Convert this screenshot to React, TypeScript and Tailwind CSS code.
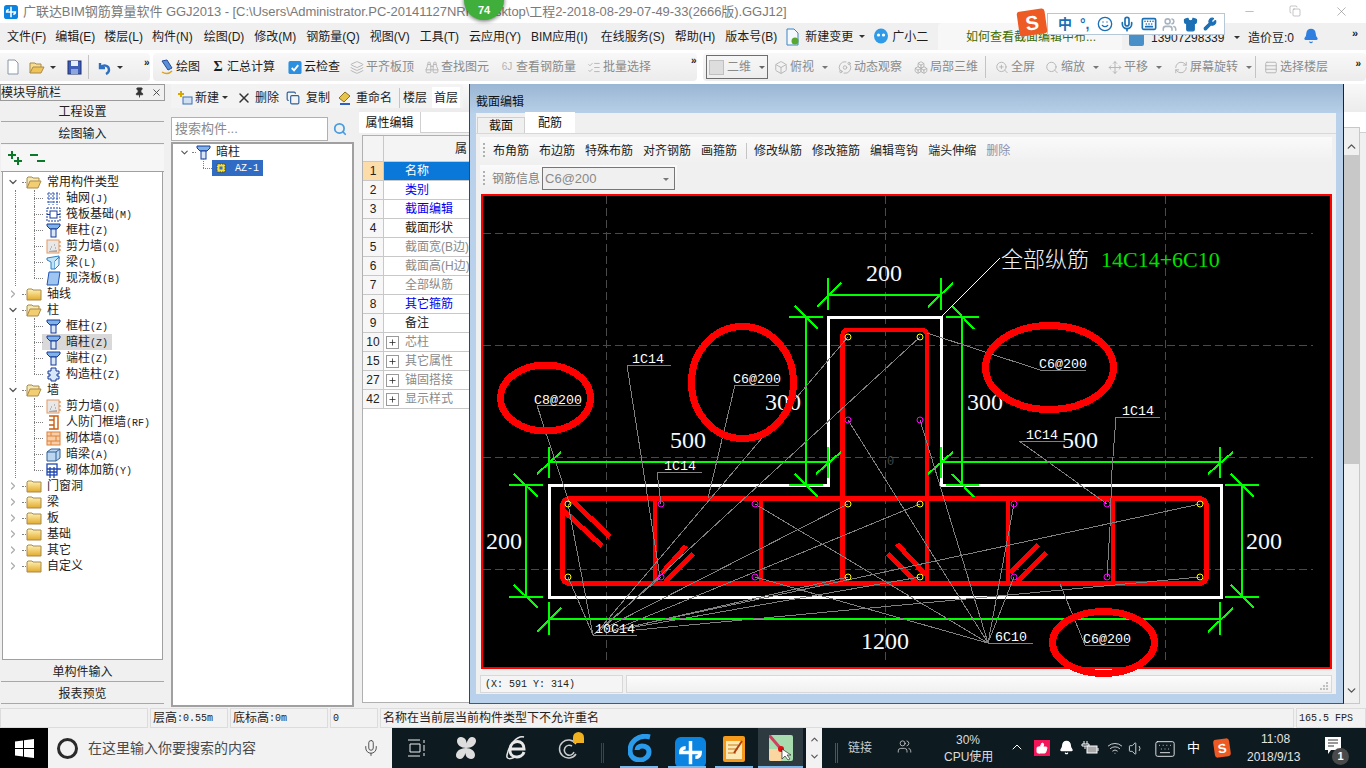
import React from "react";
import {
  Binoculars,
  Box,
  ChevronDown,
  ChevronRight,
  ChevronUp,
  Copy,
  Layers,
  ListChecks,
  Mic,
  Move,
  Orbit,
  RefreshCw,
  Rows3,
  Search,
  Shirt,
  Smile,
  Wrench,
  X,
  ZoomIn,
  Boxes,
  Bell,
  Wifi,
  Volume1,
  Keyboard,
  Users,
  ThumbsUp,
  Minus,
  Plus,
  Pin,
} from "lucide-react";

const mono = "font-['Liberation_Mono','Noto_Sans_CJK_SC',monospace]";

/* ---------- small drawn icons ---------- */
const Col = () => (
  <svg width="15" height="15" viewBox="0 0 15 15" className="shrink-0">
    <path d="M1 1h13v2l-3 3H4L1 3z" fill="#7fb2e5" stroke="#17389c" />
    <rect x="5" y="6" width="5" height="8" fill="#d7e7f8" stroke="#17389c" />
  </svg>
);
const AxisGrid = () => (
  <svg width="15" height="15" viewBox="0 0 15 15" className="shrink-0" stroke="#2a55b5" fill="none">
    <path d="M3 1v13M7 1v13M11 1v13M1 3h13M1 7h13M1 11h13" strokeDasharray="2 1" />
  </svg>
);
const Raft = () => (
  <svg width="15" height="15" viewBox="0 0 15 15" className="shrink-0" fill="none" stroke="#17389c">
    <rect x="1" y="1" width="13" height="13" strokeDasharray="2 1" />
    <rect x="4" y="4" width="7" height="7" />
    <path d="M1 7.500h3M11 7.500h3" />
  </svg>
);
const Shear = () => (
  <svg width="15" height="15" viewBox="0 0 15 15" className="shrink-0">
    <rect x="1" y="1" width="12" height="13" fill="#e8e8e8" stroke="#e49a62" />
    <path d="M3 12l8-1v2H3z" fill="#aaa" />
    <path d="M5 8h1M8 6h1M4 10h1M9 9h1" stroke="#888" />
    <path d="M13 3h2M13 7h2M13 11h2" stroke="#e07020" />
  </svg>
);
const BeamI = () => (
  <svg width="15" height="15" viewBox="0 0 15 15" className="shrink-0">
    <path d="M1 3l12-2v3L9 6v8H5V7L1 5z" fill="#bfe3f6" stroke="#2f7fc0" />
    <path d="M9 6l4-4v8l-4 4" fill="#e3f2fb" stroke="#2f7fc0" />
  </svg>
);
const Slab = () => (
  <svg width="15" height="15" viewBox="0 0 15 15" className="shrink-0">
    <path d="M3 1h11l-2 13H1z" fill="#9fc6f0" stroke="#1f54b5" />
  </svg>
);
const Struct = () => (
  <svg width="15" height="15" viewBox="0 0 15 15" className="shrink-0">
    <path d="M5 1h5v3h3v3h-2v2h2v3h-3v2H5v-2H2V9h2V7H2V4h3z" fill="#d7e7f8" stroke="#17389c" />
  </svg>
);
const DoorI = () => (
  <svg width="15" height="15" viewBox="0 0 15 15" className="shrink-0" fill="none" stroke="#c85c10" strokeWidth="1.4">
    <path d="M3 1h9v13H3M8 1v13M3 5h5M3 10h5" />
  </svg>
);
const Brick = () => (
  <svg width="15" height="15" viewBox="0 0 15 15" className="shrink-0">
    <rect x="1" y="1" width="13" height="13" fill="#f6cfa8" stroke="#e0803a" />
    <path d="M1 5h13M1 10h13M5 1v4M10 5v5M5 10v4" stroke="#e0803a" />
  </svg>
);
const DarkBeam = () => (
  <svg width="15" height="15" viewBox="0 0 15 15" className="shrink-0">
    <path d="M1 5l4-3h9v9l-4 3H1z" fill="#bcd6f0" stroke="#2f5f99" />
    <path d="M1 5h9v9M10 5l4-3" fill="none" stroke="#2f5f99" />
  </svg>
);
const RebarI = () => (
  <svg width="15" height="15" viewBox="0 0 15 15" className="shrink-0" fill="none" stroke="#1f48b0" strokeWidth="1.3">
    <rect x="1" y="1" width="10" height="11" />
    <path d="M4 4v11M8 4v11M1 6h14M1 9h10" />
  </svg>
);
const FolderC = () => (
  <svg width="16" height="14" viewBox="0 0 16 14" className="shrink-0">
    <defs>
      <linearGradient id="fc" x1="0" y1="0" x2="0" y2="1">
        <stop offset="0" stopColor="#fff3b8" />
        <stop offset="1" stopColor="#e3a92c" />
      </linearGradient>
    </defs>
    <path d="M1 3l1-1h4l1 1h8v10H1z" fill="url(#fc)" stroke="#a98a4a" />
  </svg>
);
const FolderO = () => (
  <svg width="16" height="14" viewBox="0 0 16 14" className="shrink-0">
    <path d="M1 13V3l1-1h4l1 1h6v3" fill="#f7e7b0" stroke="#a98a4a" />
    <path d="M1 13l3-7h11l-3 7z" fill="#f3cd72" stroke="#a98a4a" />
  </svg>
);
const Gear = () => (
  <svg width="12" height="12" viewBox="0 0 12 12" className="shrink-0">
    <rect x="2" y="2" width="8" height="8" fill="#f4e13c" stroke="#5a4a00" strokeDasharray="1.500 1" />
    <rect x="4.500" y="4.500" width="3" height="3" fill="#3a6fc9" />
  </svg>
);
const AppLogo = ({ size }: { size: number }) => (
  <svg width={size} height={size} viewBox="0 0 16 16" className="shrink-0">
    <rect width="16" height="16" rx="3" fill="#0a84e0" />
    <path d="M8 2v12M8 8H3c0-2 1-2.500 2.500-2.500M8 8h5c0 2-1 2.500-2.500 2.500" fill="none" stroke="#fff" strokeWidth="1.800" />
  </svg>
);

/* ---------- top bars ---------- */
const MENU = ["文件(F)", "编辑(E)", "楼层(L)", "构件(N)", "绘图(D)", "修改(M)", "钢筋量(Q)", "视图(V)", "工具(T)", "云应用(Y)", "BIM应用(I)", "在线服务(S)", "帮助(H)", "版本号(B)"];

const Caret = ({ className = "" }: { className?: string }) => (
  <span className={`inline-block w-0 h-0 border-x-[3px] border-x-transparent border-t-[3px] border-t-[#333] shrink-0 ${className}`} />
);

const Tool = ({ icon, text, off, ml, caret }: { icon: React.ReactNode; text: string; off?: boolean; ml: string; caret?: boolean }) => (
  <span className={`flex items-center gap-[2px] ${ml} ${off ? "text-[#8a8a8a]" : "text-[#1c1c1c]"}`}>
    <span className="w-[14px] h-[16px] flex items-center justify-center shrink-0">{icon}</span>
    <span className="whitespace-nowrap">{text}</span>
    {caret && <Caret className="ml-[6px] border-t-[#777]" />}
  </span>
);

const gray = { size: 15, color: "#b4b4b4", strokeWidth: 1.6 };

function TitleBar() {
  return (
    <div className="h-[23px] flex items-center bg-white text-[13px] text-[#7a7a7a] relative shrink-0">
      <span className="ml-[4px]"><AppLogo size={14} /></span>
      <span className="ml-[5px] whitespace-nowrap leading-none tracking-[-0.06px]">
        广联达BIM钢筋算量软件 GGJ2013 - [C:\Users\Administrator.PC-20141127NRH\Desktop\工程2-2018-08-29-07-49-33(2666版).GGJ12]
      </span>
      <Minus className="absolute left-[1243px] top-[5px]" size={13} color="#888" strokeWidth={1} />
      <Copy className="absolute left-[1289px] top-[5px]" size={12} color="#888" strokeWidth={1} />
      <X className="absolute left-[1334px] top-[4px]" size={15} color="#888" strokeWidth={1} />
    </div>
  );
}

function MenuBar() {
  return (
    <div className="h-[27px] flex items-center bg-[#f0f0f0] pl-[7px] text-[#1c1c1c] shrink-0 relative">
      <div className="flex items-center gap-[10px]">
        {MENU.map((m, i) => (
          <span key={m} className={`whitespace-nowrap ${i === 11 ? "ml-[3px]" : ""} ${i > 0 && i < 4 ? "-ml-[1px]" : ""} ${i === 4 ? "ml-[1px]" : ""}`}>{m}</span>
        ))}
      </div>
      <svg width="15" height="18" viewBox="0 0 15 18" className="ml-[8px] shrink-0">
        <path d="M2 1h7l4 4v12H2z" fill="#f4f9ff" stroke="#3d85c6" />
        <circle cx="10" cy="13" r="3.500" fill="#58a830" />
      </svg>
      <span className="ml-[5px] whitespace-nowrap">新建变更</span>
      <Caret className="ml-[6px]" />
      <svg width="16" height="17" viewBox="0 0 16 17" className="ml-[8px] shrink-0">
        <ellipse cx="8" cy="8" rx="7" ry="7.500" fill="#2f9be8" />
        <circle cx="5.500" cy="7" r="1.600" fill="#fff" />
        <circle cx="10.500" cy="7" r="1.600" fill="#fff" />
      </svg>
      <span className="ml-[3px] whitespace-nowrap">广小二</span>
      <span className="absolute left-[938px] top-0 h-[27px] w-[184px] bg-[#f7f7f7] rounded-t-[4px] flex items-center pl-[28px] text-[#3f6b00] whitespace-nowrap">
        如何查看截面编辑中布...
      </span>
      <span className="absolute left-[1129px] top-[8px] w-[15px] h-[15px] rounded-[2px] bg-[#4a90c8]" />
      <span className="absolute left-[1151px] top-[6px] whitespace-nowrap">13907298339</span>
      <Caret className="absolute left-[1234px] top-[13px]" />
      <span className="absolute left-[1248px] top-[6px] whitespace-nowrap">造价豆:0</span>
      <Bell className="absolute left-[1303px] top-[5px]" size={16} color="#2f7fe0" fill="#2f7fe0" />
      <span className="absolute left-[1352px] top-[2px] text-[11px] font-bold">»</span>
    </div>
  );
}

function ToolBar() {
  return (
    <div className="h-[28px] mt-[3px] mb-[3px] flex items-center text-[#1c1c1c] shrink-0 relative">
      <div className="h-full w-[150px] bg-gradient-to-b from-[#f8f8f8] to-[#ececec] rounded-r-[4px] flex items-center pl-[6px] relative">
        <svg width="14" height="16" viewBox="0 0 14 16"><path d="M2 1h7l3 3v11H2z" fill="#fff" stroke="#8a96a8" /></svg>
        <svg width="16" height="15" viewBox="0 0 16 15" className="ml-[9px]"><path d="M1 13V3h5l1 1h5v3" fill="#f7dd8f" stroke="#a98a4a" /><path d="M1 13l3-6h11l-3 6z" fill="#efc35a" stroke="#a98a4a" /></svg>
        <Caret className="ml-[5px]" />
        <svg width="15" height="15" viewBox="0 0 15 15" className="ml-[11px]"><rect x="1" y="1" width="13" height="13" fill="#3f5fb5" stroke="#1f2f70" /><rect x="4" y="1" width="7" height="5" fill="#e8eefc" /><rect x="4" y="9" width="7" height="5" fill="#8ea6de" /></svg>
        <span className="ml-[6px] w-px h-[24px] bg-[#c4c4c4]" />
        <svg width="14" height="15" viewBox="0 0 14 15" className="ml-[8px]" fill="none" stroke="#2f6fc0" strokeWidth="2.400"><path d="M3 3v5h5" /><path d="M3 8c3-4 9-3 9 2 0 2-1 3-3 4" /></svg>
        <Caret className="ml-[6px]" />
        <span className="ml-[21px] text-[10px] font-bold leading-none -mt-[8px]">»</span>
      </div>
      <div className="h-full w-[544px] ml-[3px] bg-gradient-to-b from-[#f8f8f8] to-[#ececec] rounded-[4px] flex items-center pl-[7px]">
        <Tool ml="" text="绘图" icon={<svg width="14" height="16" viewBox="0 0 14 16"><path d="M2 2l6 9 4-2-5-8z" fill="#5a8fd8" stroke="#234a9a" /><path d="M2 13c3 2 7 2 10-1" stroke="#e0a020" strokeWidth="1.500" fill="none" /></svg>} />
        <Tool ml="ml-[11px]" text="汇总计算" icon={<span className="font-['Liberation_Serif'] font-bold text-[14px] leading-none">Σ</span>} />
        <Tool ml="ml-[13px]" text="云检查" icon={<svg width="15" height="15" viewBox="0 0 15 15"><rect x="0.500" y="0.500" width="14" height="14" rx="2" fill="#2c8fe0" /><path d="M4 8l2.500 2.500L11 5" stroke="#fff" strokeWidth="2" fill="none" /></svg>} />
        <Tool ml="ml-[10px]" off text="平齐板顶" icon={<Layers {...gray} />} />
        <Tool ml="ml-[11px]" off text="查找图元" icon={<Binoculars {...gray} />} />
        <Tool ml="ml-[11px]" off text="查看钢筋量" icon={<span className="text-[#b4b4b4] text-[10px] leading-none whitespace-nowrap">6J</span>} />
        <Tool ml="ml-[11px]" off text="批量选择" icon={<ListChecks {...gray} />} />
      </div>
      <span className="absolute left-[691px] top-[0px] text-[10px] font-bold">»</span>
      <div className="h-full flex-1 ml-[6px] bg-gradient-to-b from-[#f8f8f8] to-[#ececec] rounded-[4px] flex items-center pl-[3px] text-[#8a8a8a]">
        <span className="w-[62px] h-[24px] border border-[#6e6e6e] flex items-center pl-[2px] gap-[3px] shrink-0 whitespace-nowrap">
          <span className="w-[15px] h-[15px] bg-[#ddd] border border-[#c0c0c0] shrink-0" />
          <span>二维</span>
          <Caret className="ml-[5px] border-t-[#666]" />
        </span>
        <Tool ml="ml-[6px]" off caret text="俯视" icon={<Box {...gray} />} />
        <Tool ml="ml-[10px]" off text="动态观察" icon={<Orbit {...gray} />} />
        <Tool ml="ml-[12px]" off text="局部三维" icon={<Boxes {...gray} />} />
        <span className="ml-[7px] w-px h-[22px] bg-[#c4c4c4]" />
        <Tool ml="ml-[9px]" off text="全屏" icon={<ZoomIn {...gray} />} />
        <Tool ml="ml-[10px]" off caret text="缩放" icon={<Search {...gray} />} />
        <Tool ml="ml-[9px]" off caret text="平移" icon={<Move {...gray} />} />
        <Tool ml="ml-[12px]" off caret text="屏幕旋转" icon={<RefreshCw {...gray} />} />
        <span className="ml-[3px] w-px h-[22px] bg-[#c4c4c4]" />
        <Tool ml="ml-[8px]" off text="选择楼层" icon={<Rows3 {...gray} />} />
        <span className="ml-auto mr-[5px] text-[10px] font-bold text-[#1c1c1c] -mt-[8px]">»</span>
      </div>
    </div>
  );
}

/* ---------- left navigation ---------- */
const NavButton = ({ text }: { text: string }) => (
  <div className="h-[21px] mb-[1px] mx-[1px] pt-[1px] bg-[#f0f0f0] border-b border-[#a8a8a8] flex items-center justify-center text-[#222] text-[12px]">{text}</div>
);

const Group = ({ name, open }: { name: string; open?: boolean }) => (
  <div className="relative h-[16px] flex items-center pl-[4px]">
    {open ? <ChevronDown size={12} color="#555" strokeWidth={2.4} /> : <ChevronRight size={12} color="#aaa" strokeWidth={2.4} />}
    <span className="w-[4px] ml-[3px] border-t border-dotted border-[#808080]" />
    {open ? <FolderO /> : <FolderC />}
    <span className="ml-[5px] text-[#222]">{name}</span>
  </div>
);

const Leaf = ({ icon, name, code, last, active }: { icon: React.ReactNode; name: string; code: string; last?: boolean; active?: boolean }) => (
  <div className="relative h-[16px] flex items-center pl-[39px]">
    <span className="absolute left-[12px] top-0 h-full border-l border-dotted border-[#808080]" />
    <span className={`absolute left-[31px] top-0 border-l border-dotted border-[#808080] ${last ? "h-[8px]" : "h-full"}`} />
    <span className="absolute left-[31px] top-[8px] w-[9px] border-t border-dotted border-[#808080]" />
    <span className={`flex items-center h-[16px] pr-[4px] ${active ? "bg-[#d9d9d9]" : ""}`}>
      <span className="ml-[4px]">{icon}</span>
      <span className="ml-[5px] text-[#222] whitespace-nowrap">
        {name}
        <span className={`${mono} text-[10px]`}>{code}</span>
      </span>
    </span>
  </div>
);

function LeftPanel() {
  return (
    <div className="w-[165px] shrink-0 flex flex-col h-full">
      <div className="h-[17px] bg-[#f0f0f0] border border-[#9a9a9a] flex items-center text-[#222] relative leading-none">
        <span>模块导航栏</span>
        <Pin className="absolute left-[133px] top-[2px]" size={11} color="#333" fill="#333" />
        <X className="absolute left-[150px] top-[2px]" size={11} color="#444" />
      </div>
      <NavButton text="工程设置" />
      <NavButton text="绘图输入" />
      <div className="h-[27px] mx-[1px] flex items-center pl-[6px] bg-[#f6f6f6] border-b border-[#a0a0a0]">
        <svg width="16" height="16" viewBox="0 0 16 16" stroke="#0a7a2a" strokeWidth="2"><path d="M5 1v8M1 5h8M11 7v8M7 11h8" /></svg>
        <svg width="16" height="16" viewBox="0 0 16 16" stroke="#0a7a2a" strokeWidth="2" className="ml-[7px]"><path d="M0 5h8M7 11h8" /></svg>
      </div>
      <div className="h-[488px] mx-[2px] bg-white border-x border-b border-[#a0a0a0] text-[12px] pt-[2px] overflow-hidden">
        <Group name="常用构件类型" open />
        <Leaf icon={<AxisGrid />} name="轴网" code="(J)" />
        <Leaf icon={<Raft />} name="筏板基础" code="(M)" />
        <Leaf icon={<Col />} name="框柱" code="(Z)" />
        <Leaf icon={<Shear />} name="剪力墙" code="(Q)" />
        <Leaf icon={<BeamI />} name="梁" code="(L)" />
        <Leaf icon={<Slab />} name="现浇板" code="(B)" last />
        <Group name="轴线" />
        <Group name="柱" open />
        <Leaf icon={<Col />} name="框柱" code="(Z)" />
        <Leaf icon={<Col />} name="暗柱" code="(Z)" active />
        <Leaf icon={<Col />} name="端柱" code="(Z)" />
        <Leaf icon={<Struct />} name="构造柱" code="(Z)" last />
        <Group name="墙" open />
        <Leaf icon={<Shear />} name="剪力墙" code="(Q)" />
        <Leaf icon={<DoorI />} name="人防门框墙" code="(RF)" />
        <Leaf icon={<Brick />} name="砌体墙" code="(Q)" />
        <Leaf icon={<DarkBeam />} name="暗梁" code="(A)" />
        <Leaf icon={<RebarI />} name="砌体加筋" code="(Y)" last />
        {["门窗洞", "梁", "板", "基础", "其它", "自定义"].map((g) => (
          <Group key={g} name={g} />
        ))}
      </div>
      <div className="h-[1px]" />
      <NavButton text="单构件输入" />
      <NavButton text="报表预览" />
    </div>
  );
}

/* ---------- component list ---------- */
function MiddlePanel() {
  return (
    <div className="w-[183px] ml-[6px] shrink-0 flex flex-col h-full">
      <div className="h-[24px] pt-[3px] flex items-center text-[#1c1c1c] whitespace-nowrap bg-[#f3f3f3] w-[292px] relative z-0">
        <svg width="15" height="15" viewBox="0 0 15 15" className="ml-[7px]"><path d="M3 1v6M0 4h6" stroke="#d8a800" strokeWidth="2" /><rect x="5" y="7" width="9" height="7" fill="#cfe0f5" stroke="#3f6fb0" /></svg>
        <span className="ml-[2px]">新建</span>
        <Caret className="ml-[3px]" />
        <X className="ml-[8px]" size={16} color="#333" strokeWidth={2.2} />
        <span className="ml-[3px]">删除</span>
        <Copy className="ml-[7px]" size={14} color="#2f5f99" />
        <span className="ml-[6px]">复制</span>
        <svg width="15" height="15" viewBox="0 0 15 15" className="ml-[7px]"><path d="M2 8l6-6 5 4-6 6z" fill="#e6c54a" stroke="#8a7020" /><path d="M3 14h10" stroke="#2f5fc0" strokeWidth="2" /></svg>
        <span className="ml-[4px]">重命名</span>
        <span className="ml-[7px] w-px h-[20px] bg-[#c4c4c4]" />
        <span className="ml-[3px]">楼层</span>
        <span className="ml-[5px] px-[2px] h-[21px] bg-white flex items-center">首层</span>
      </div>
      <div className="flex items-center mt-[9px] h-[24px] shrink-0">
        <div className="w-[157px] h-[24px] bg-white border border-[#b0b0b0] flex items-center pl-[3px] text-[#8a8a8a] text-[13px]">搜索构件...</div>
        <Search className="ml-[5px]" size={14} color="#4a9be0" strokeWidth={3} />
      </div>
      <div className="mt-[1px] flex-1 bg-white border-2 border-[#a0a0a0] relative text-[12px]">
        <div className="h-[16px] flex items-center pl-[6px]">
          <ChevronDown size={11} color="#555" strokeWidth={2.4} />
          <span className="w-[4px] ml-[2px] border-t border-dotted border-[#808080]" />
          <Col />
          <span className="ml-[5px] text-[#222]">暗柱</span>
        </div>
        <div className="relative h-[16px] ml-[39px] w-[51px] bg-[#316cc4] flex items-center pl-[3px] text-white">
          <span className="absolute -left-[9px] -top-[2px] h-[10px] border-l border-dotted border-[#808080]" />
          <span className="absolute -left-[9px] top-[8px] w-[9px] border-t border-dotted border-[#808080]" />
          <Gear />
          <span className={`ml-[8px] ${mono} text-[10px]`}>AZ-1</span>
        </div>
      </div>
    </div>
  );
}

/* ---------- property table (mostly behind the dialog) ---------- */
const PROPS: { n: string; t: string; c: string; plus?: boolean; sel?: boolean }[] = [
  { n: "1", t: "名称", c: "text-white", sel: true },
  { n: "2", t: "类别", c: "text-[#0000f0]" },
  { n: "3", t: "截面编辑", c: "text-[#0000f0]" },
  { n: "4", t: "截面形状", c: "text-[#222]" },
  { n: "5", t: "截面宽(B边)", c: "text-[#8a8a8a]" },
  { n: "6", t: "截面高(H边)", c: "text-[#8a8a8a]" },
  { n: "7", t: "全部纵筋", c: "text-[#8a8a8a]" },
  { n: "8", t: "其它箍筋", c: "text-[#0000f0]" },
  { n: "9", t: "备注", c: "text-[#222]" },
  { n: "10", t: "芯柱", c: "text-[#8a8a8a]", plus: true },
  { n: "15", t: "其它属性", c: "text-[#8a8a8a]", plus: true },
  { n: "27", t: "锚固搭接", c: "text-[#8a8a8a]", plus: true },
  { n: "42", t: "显示样式", c: "text-[#8a8a8a]", plus: true },
];

function RightPanel() {
  return (
    <div className="flex-1 ml-[5px] h-full flex flex-col bg-[#f0f0f0]">
      <div className="h-[28px] bg-gradient-to-b from-[#f8f8f8] to-[#ececec] shrink-0" />
      <div className="h-[21px] bg-white border-b border-[#d0d0d0] shrink-0 flex">
        <span className="w-[62px] h-[21px] bg-white border-r border-[#d0d0d0] flex items-center justify-center text-[#111]">属性编辑</span>
      </div>
      <div className="flex-1 flex">
        <div className="ml-[3px] mt-[2px] mb-[4px] w-[110px] overflow-hidden bg-white border border-[#b0b0b0] text-[12px]">
          <div className="h-[26px] flex border-b border-[#c8c8c8] bg-[#f4f4f4]">
            <span className="w-[21px] border-r border-[#c8c8c8]" />
            <span className="pl-[71px] flex items-center text-[#222]">属</span>
          </div>
          {PROPS.map((p) => (
            <div key={p.n} className="h-[19px] flex border-b border-[#c8c8c8] whitespace-nowrap">
              <span className={`w-[21px] shrink-0 border-r border-[#c8c8c8] flex items-center justify-center text-[#222] text-[12px] ${p.sel ? "bg-[#fcdca8]" : "bg-[#f7f7f7]"}`}>{p.n}</span>
              <span className={`flex-1 flex items-center pl-[21px] ${p.sel ? "bg-[#0a78d8]" : ""} ${p.c}`}>
                {p.plus && (
                  <span className="-ml-[19px] mr-[6px] w-[13px] h-[13px] border border-[#9a9a9a] flex items-center justify-center shrink-0">
                    <Plus size={9} color="#222" />
                  </span>
                )}
                {p.t}
              </span>
            </div>
          ))}
        </div>
      </div>
    </div>
  );
}

/* ---------- the section drawing ---------- */
const YELLOW = [[568, 504], [568, 577], [848, 504], [848, 577], [920, 504], [920, 577], [1200, 504], [1200, 577], [848, 337], [920, 337]];
const MAGENTA = [[661, 504], [661, 577], [755, 504], [755, 577], [1014, 504], [1014, 577], [1107, 504], [1107, 577], [848, 420], [920, 420]];

// dimension lines: [x1, y1, x2, y2]
const GREEN = [
  // top 200
  [828, 295, 941, 295], [828, 278, 828, 310], [817, 307, 841, 283], [941, 278, 941, 310], [928, 307, 953, 283],
  // left 300
  [806, 317, 806, 485], [789, 317, 823, 317], [795, 306, 818, 329], [789, 485, 823, 485], [795, 474, 818, 497],
  // right 300
  [962, 317, 962, 485], [946, 317, 979, 317], [952, 306, 974, 329], [946, 485, 979, 485], [952, 474, 974, 497],
  // 500 left and right
  [549, 462, 828, 462], [549, 447, 549, 478], [537, 474, 561, 452], [828, 447, 828, 478], [816, 474, 841, 452],
  [941, 462, 1220, 462], [941, 447, 941, 478], [928, 474, 953, 452], [1220, 447, 1220, 478], [1208, 474, 1233, 452],
  // left 200
  [526, 485, 526, 597], [509, 485, 543, 485], [514, 474, 538, 497], [509, 597, 543, 597], [514, 585, 538, 608],
  // right 200
  [1242, 485, 1242, 597], [1225, 485, 1259, 485], [1231, 474, 1254, 497], [1225, 597, 1259, 597], [1231, 585, 1254, 608],
  // 1200
  [549, 619, 1220, 619], [549, 602, 549, 635], [537, 632, 561, 608], [1220, 602, 1220, 635], [1208, 632, 1233, 608],
];

const HOOKS = [
  [572, 500, 610, 537], [563, 510, 602, 546],
  [662, 573, 686, 546], [665, 582, 693, 554],
  [897, 544, 926, 575], [888, 554, 917, 583],
  [1010, 573, 1038, 545], [1017, 582, 1046, 553],
];

const LEADERS = [
  "M537 405.500H581M537 405.500L570 505",
  "M627 365.500H671M627 365.500L660 577",
  "M657 472H702M657 472L661 504",
  "M735 385H779M735 385L708 498",
  "M1040 370H1086M1040 370L927 333",
  "M1116 417H1160M1116 417L1112 470L1110 527L1107 577",
  "M1019 441H1065M1019 441L1107 504",
  "M1085 645H1129M1085 645L1060 584",
  "M593 635H637",
  "M593 635L568 504M593 635L568 577M593 635L661 577M597 632L848 337M601 630L920 337",
  "M605 628L848 504M608 632L848 577M612 631L920 577M614 630L920 504M620 629L1200 504M636 630L1200 577",
  "M988 643H1033",
  "M988 643L755 504M988 643L755 577M988 643L1014 504M988 643L1014 577M988 643L848 420M988 643L920 420",
];

const LABELS: [string, number, number][] = [
  ["C8@200", 534, 404], ["1C14", 632, 363], ["1C14", 664, 470], ["C6@200", 733, 383],
  ["C6@200", 1039, 368], ["1C14", 1122, 415], ["1C14", 1026, 439], ["10C14", 595, 633],
  ["6C10", 995, 641], ["C6@200", 1083, 643],
];

const DIMS: [string, number, number][] = [
  ["200", 866, 281], ["300", 765, 410], ["300", 967, 410], ["500", 670, 448], ["500", 1062, 448],
  ["200", 486, 549], ["200", 1246, 549], ["1200", 861, 649],
];

function Drawing() {
  return (
    <svg width="851" height="475" viewBox="481 194 851 475" className="block overflow-visible ml-[5px] mt-[3px] relative z-10 shrink-0" shapeRendering="crispEdges">
      <rect x="482" y="195" width="849" height="473" fill="#000" stroke="#f00" strokeWidth="2" />
      <g stroke="#4a4a4a" strokeDasharray="8 4" fill="none">
        <path d="M483 233H1313M483 345H1313M483 457H1313M483 569H1313" />
        <path d="M606 196V663M885 196V663M1165 196V663" />
      </g>
      <path d="M828 485V317H941V485H1221V597H549V485Z" fill="none" stroke="#fff" strokeWidth="3" />
      <g fill="none" stroke="#f00">
        <rect x="562.500" y="498.500" width="644" height="85" rx="7" strokeWidth="5" />
        <path d="M842.500 583V336Q842.500 330 848 330H921Q927 330 927 336V583" strokeWidth="4.500" />
        <path d="M655 498V583M761 498V583M1008 498V583M1113 498V583" strokeWidth="4" />
        {HOOKS.map(([a, b, c, d]) => (
          <line key={`${a}-${b}`} x1={a} y1={b} x2={c} y2={d} strokeWidth="5" />
        ))}
      </g>
      <g stroke="#0f0" strokeWidth="2">
        {GREEN.map(([a, b, c, d]) => (
          <line key={`${a}-${b}-${c}-${d}`} x1={a} y1={b} x2={c} y2={d} />
        ))}
      </g>
      <path d="M942 316L1000 258" stroke="#fff" fill="none" />
      <g stroke="#808080" fill="none">
        {LEADERS.map((d) => (
          <path key={d} d={d} />
        ))}
      </g>
      <g shapeRendering="auto" fill="none">
        {YELLOW.map(([x, y]) => (
          <circle key={`y${x}-${y}`} cx={x} cy={y} r="3" stroke="#ff0" />
        ))}
        {MAGENTA.map(([x, y]) => (
          <circle key={`m${x}-${y}`} cx={x} cy={y} r="3" stroke="#f0f" />
        ))}
      </g>
      <g className={mono} fontSize="13.300" fill="#fff">
        {LABELS.map(([t, x, y]) => (
          <text key={`${x}-${y}`} x={x} y={y}>{t}</text>
        ))}
      </g>
      <g className="font-['Liberation_Serif',serif]" fontSize="24" fill="#f4f8ff">
        {DIMS.map(([t, x, y]) => (
          <text key={`${t}${x}`} x={x} y={y}>{t}</text>
        ))}
      </g>
      <text x="887" y="465" fontSize="12" fill="#444" className={mono}>0</text>
      <text x="1001" y="267" fontSize="22" fill="#eef2f8" className="font-['Noto_Sans_CJK_SC',sans-serif]" fontWeight="300">全部纵筋</text>
      <text x="1101" y="267" fontSize="22" fill="#00e000" className="font-['Liberation_Serif',serif]">14C14+6C10</text>
      <g fill="none" stroke="#f00" strokeWidth="7">
        <ellipse cx="545.500" cy="398" rx="45" ry="33" />
        <ellipse cx="742.500" cy="382.500" rx="51" ry="56" />
        <ellipse cx="1049.500" cy="367.500" rx="64" ry="42" />
        <ellipse cx="1103.500" cy="642.500" rx="51" ry="31" />
      </g>
    </svg>
  );
}

/* ---------- dialog window ---------- */
const EDIT_TOOLS = ["布角筋", "布边筋", "特殊布筋", "对齐钢筋", "画箍筋"];
const EDIT_TOOLS2 = ["修改纵筋", "修改箍筋", "编辑弯钩", "端头伸缩"];

const Grip = () => (
  <span className="w-[2px] h-[16px] shrink-0 bg-[repeating-linear-gradient(to_bottom,#b0b0b0_0,#b0b0b0_2px,transparent_2px,transparent_4px)]" />
);

function Dialog() {
  return (
    <div className="absolute left-[469px] top-[84px] w-[875px] h-[620px] border-l border-[#444] border-r border-r-[#222] border-b border-b-[#10708a] bg-[#b9d1ea] flex flex-col z-10">
      <div className="h-[29px] shrink-0 bg-gradient-to-b from-[#9ab6d3] to-[#b7cfe8] flex items-center pl-[6px] pt-[6px] text-[#111]">截面编辑</div>
      <div className="h-[581px] mx-[6px] bg-[#f0f0f0] flex flex-col shrink-0 w-[860px]">
        <div className="h-[21px] flex items-end shrink-0 border-b border-[#d8d8d8] pl-[1px]">
          <span className="w-[48px] h-[16px] bg-[#f0f0f0] border border-b-0 border-[#d0d0d0] flex items-center justify-center text-[#111]">截面</span>
          <span className="w-[50px] h-[21px] pt-[1px] bg-white flex items-center justify-center text-[#111]">配筋</span>
        </div>
        <div className="mx-[4px] mt-[3px] h-[26px] pt-[2px] shrink-0 bg-gradient-to-b from-[#fafafa] to-[#f0f0f0] flex items-center pl-[3px] text-[#1c1c1c]">
          <Grip />
          {EDIT_TOOLS.map((t, i) => (
            <span key={t} className={i === 0 ? "ml-[8px]" : "ml-[10px]"}>{t}</span>
          ))}
          <span className="ml-[9px] w-px h-[16px] bg-[#c4c4c4]" />
          {EDIT_TOOLS2.map((t, i) => (
            <span key={t} className={i === 0 ? "ml-[7px]" : "ml-[10px]"}>{t}</span>
          ))}
          <span className="ml-[10px] text-[#8f8fa8]">删除</span>
        </div>
        <div className="ml-[4px] mt-[2px] w-[197px] h-[26px] pt-[1px] shrink-0 bg-gradient-to-b from-[#fafafa] to-[#f0f0f0] flex items-center pl-[3px]">
          <Grip />
          <span className="ml-[7px] text-[#808080]">钢筋信息</span>
          <span className="ml-[2px] w-[133px] h-[23px] border border-[#767676] bg-[#f0f0f0] flex items-center pl-[2px] text-[#8a8a8a] text-[13px] relative">
            C6@200
            <Caret className="absolute right-[5px] top-[10px] border-t-[#777]" />
          </span>
        </div>
        <Drawing />
        <div className="mt-[6px] h-[18px] flex mx-[4px] shrink-0 text-[#222]">
          <span className={`w-[143px] h-[18px] bg-[#f5f5f5] border border-[#d8d8d8] flex items-center pl-[4px] ${mono} text-[10px]`}>(X: 591 Y: 314)</span>
          <span className="ml-[3px] flex-1 h-[18px] bg-gradient-to-b from-[#fcfcfc] to-[#f0f0f0] border border-[#d8d8d8] flex items-end justify-end pr-[2px]">
            <svg width="10" height="10" viewBox="0 0 10 10" fill="#c0c0c0"><path d="M7 0h2v2H7zM4 3h2v2H4zM7 3h2v2H7zM1 6h2v2H1zM4 6h2v2H4zM7 6h2v2H7z" /></svg>
          </span>
        </div>
      </div>
    </div>
  );
}

/* ---------- status and task bars ---------- */
function StatusBar() {
  const cell = "h-[20px] bg-[#f2f2f2] border border-[#dcdcdc] flex items-center pl-[2px] text-[#222] shrink-0";
  return (
    <div className="h-[21px] flex gap-[2px] bg-[#f0f0f0] shrink-0 pt-[1px]">
      <span className={`${cell} w-[148px]`} />
      <span className={`${cell} w-[78px]`}>层高<span className={`${mono} text-[10px]`}>:0.55m</span></span>
      <span className={`${cell} w-[98px]`}>底标高<span className={`${mono} text-[10px]`}>:0m</span></span>
      <span className={`${cell} w-[48px] ${mono} text-[10px]`}>0</span>
      <span className={`${cell} w-[914px]`}>名称在当前层当前构件类型下不允许重名</span>
      <span className={`${cell} flex-1 shrink ${mono} text-[10px]`}>165.5 FPS</span>
    </div>
  );
}

const Active = ({ className }: { className: string }) => <span className={`absolute bottom-0 h-[2px] bg-[#76b9ed] ${className}`} />;

function TaskBar() {
  return (
    <div className="h-[40px] bg-[#0d1b21] relative flex items-center text-white shrink-0 overflow-hidden">
      <div className="w-[48px] h-full bg-black flex items-center justify-center shrink-0">
        <svg width="21" height="21" viewBox="0 0 21 21" fill="#fff"><path d="M1 3.500l8-1v7.500H1zM10 2.300l10-1.300V10H10zM1 11h8v7.500l-8-1zM10 11h10v9l-10-1.300z" /></svg>
      </div>
      <div className="w-[344px] h-full bg-[#f2f2f2] flex items-center shrink-0 relative">
        <span className="ml-[9px] w-[21px] h-[21px] rounded-full border-[3px] border-[#2a2a2a] shrink-0" />
        <span className="ml-[10px] text-[14px] text-[#4a4a4a]">在这里输入你要搜索的内容</span>
        <Mic className="absolute left-[314px] top-[11px]" size={18} color="#444" strokeWidth={1.2} />
      </div>
      <svg width="20" height="18" viewBox="0 0 20 18" className="absolute left-[407px] top-[11px]" fill="none" stroke="#eee"><path d="M1 1h12M3 5h10v8H3zM1 17h12M17 1v3M17 6v6M17 14v3" /></svg>
      <svg width="22" height="26" viewBox="0 0 22 26" className="absolute left-[455px] top-[7px]" fill="#ddd"><path d="M11 13C6 13 2 10 2 6s4-5 7-3 3 6 2 10zM11 13c0 5-2 11-6 11s-5-4-3-7 6-4 9-4zM11 13c5 0 9 3 9 7s-4 5-7 3-3-6-2-10zM11 13c0-5 2-11 6-11s5 4 3 7-6 4-9 4z" /></svg>
      <svg width="24" height="26" viewBox="0 0 24 26" className="absolute left-[505px] top-[7px]" fill="none" stroke="#e8e8e8"><path d="M5 14h14c0-10-13-10-14 0s12 10 14 3" strokeWidth="3" /><path d="M19 2C12 0 4 10 2 20c-1 5 4 4 8 2" strokeWidth="1.500" /></svg>
      <svg width="22" height="22" viewBox="0 0 22 22" className="absolute left-[558px] top-[10px]" fill="none" stroke="#ccc" strokeWidth="1.500"><path d="M18 6A9 9 0 1 0 18 16M14 8a5 5 0 1 0 2 6" /></svg>
      <span className="absolute left-[573px] top-[4px] w-[11px] h-[11px] rounded-t-full bg-[#f0b020]" />
      <span className="absolute left-[601px] top-[15px] w-px h-[20px] bg-[#3a464c]" />
      <span className="absolute left-[603px] top-[15px] w-px h-[20px] bg-[#3a464c]" />
      <svg width="24" height="28" viewBox="0 0 24 28" className="absolute left-[628px] top-[6px]"><path d="M22 3C10 0 2 8 2 17c0 6 5 9 10 9s9-4 9-8-3-6-7-6c-3 0-5 2-5 4" fill="none" stroke="#2a9bea" strokeWidth="5" /></svg>
      <span className="absolute left-[675px] top-[9px]"><AppLogo size={31} /></span>
      <svg width="24" height="30" viewBox="0 0 24 30" className="absolute left-[722px] top-[7px]"><rect x="1" y="1" width="22" height="26" rx="2" fill="#f59a1c" /><rect x="4" y="6" width="16" height="18" fill="#fde9b5" /><path d="M6 10h10M6 14h10M6 18h8" stroke="#c87a10" /><path d="M12 18l8-12" stroke="#b04010" strokeWidth="2" /></svg>
      <div className="absolute left-[758px] top-0 w-[45px] h-[40px] bg-[#2d3b41] flex items-center justify-center">
        <svg width="24" height="26" viewBox="0 0 24 26"><rect width="24" height="26" rx="2" fill="#a8dcae" /><path d="M0 14h12V26H2a2 2 0 0 1-2-2z" fill="#fbd6a0" /><path d="M0 0l12 14" stroke="#d04060" strokeWidth="3" /><circle cx="12" cy="14" r="3" fill="#e01010" /><path d="M13 14v10l3-3 3 4 2-1-3-4h4z" fill="#fff" stroke="#111" strokeWidth="0.600" /></svg>
      </div>
      <Active className="left-[620px] w-[38px]" />
      <Active className="left-[668px] w-[38px]" />
      <Active className="left-[715px] w-[38px]" />
      <Active className="left-[758px] w-[45px]" />
      <div className="absolute left-[806px] top-0 w-[16px] h-[40px] bg-[#f2f2f2] flex flex-col items-center justify-between py-[6px]">
        <ChevronUp size={11} color="#555" strokeWidth={2.5} />
        <ChevronDown size={11} color="#555" strokeWidth={2.5} />
      </div>
      <span className="absolute left-[835px] top-[15px] w-px h-[20px] bg-[#4a565c]" />
      <span className="absolute left-[837px] top-[15px] w-px h-[20px] bg-[#4a565c]" />
      <span className="absolute left-[848px] top-[12px] text-[12px] leading-[16px] text-[#ccc]">链接</span>
      <Users className="absolute left-[897px] top-[11px]" size={15} color="#ddd" strokeWidth={1.2} />
      <span className="absolute left-[956px] top-[4px] text-[12px] leading-[16px] text-[#ddd]">30%</span>
      <span className="absolute left-[944px] top-[21px] text-[12px] leading-[16px] text-[#ddd] whitespace-nowrap">CPU使用</span>
      <ChevronUp className="absolute left-[1009px] top-[11px]" size={16} color="#fff" strokeWidth={1.5} />
      <span className="absolute left-[1034px] top-[12px] w-[16px] h-[16px] bg-[#f41458] flex items-center justify-center"><ThumbsUp size={12} color="#fff" fill="#fff" /></span>
      <Bell className="absolute left-[1059px] top-[12px]" size={15} color="#fff" fill="#fff" />
      <svg width="18" height="16" viewBox="0 0 18 16" className="absolute left-[1081px] top-[12px]" fill="none" stroke="#fff"><path d="M3 1v3M6 1v3M1 4h7v2H1zM4 6v3" /><rect x="6" y="6" width="10" height="7" fill="#aaa" /><path d="M17 8v3" /></svg>
      <Wifi className="absolute left-[1107px] top-[12px]" size={16} color="#ccc" strokeWidth={1.5} />
      <Volume1 className="absolute left-[1128px] top-[12px]" size={17} color="#ddd" strokeWidth={1.3} />
      <Keyboard className="absolute left-[1154px] top-[10px]" size={22} color="#eee" strokeWidth={1} />
      <span className="absolute left-[1187px] top-[11px] text-[13px] leading-[18px] text-white">中</span>
      <span className="absolute left-[1214px] top-[11px] w-[16px] h-[18px] bg-[#ee5a24] rounded-[3px] rotate-[-8deg] flex items-center justify-center text-[13px] font-bold leading-none">S</span>
      <span className="absolute left-[1261px] top-[3px] text-[12px] leading-[16px] text-[#e4e4e4]">11:08</span>
      <span className="absolute left-[1247px] top-[21px] text-[12px] leading-[16px] text-[#e4e4e4] whitespace-nowrap">2018/9/13</span>
      <svg width="16" height="18" viewBox="0 0 16 18" className="absolute left-[1325px] top-[9px]"><path d="M0 0h16v13H6l-3 4v-4H0z" fill="#fff" /><path d="M3 3h10M3 6h10M3 9h6" stroke="#333" /></svg>
      <span className="absolute left-[1332px] top-[20px] w-[17px] h-[17px] rounded-full bg-[#4a4a4a] flex items-center justify-center text-[11px] font-bold leading-none">1</span>
    </div>
  );
}

/* ---------- floating pieces over the title bar ---------- */
function Overlays() {
  return (
    <>
      <div className="absolute left-[464px] -top-[20px] w-[40px] h-[40px] rounded-full bg-[#3fae3a] shadow-[0_1px_4px_rgba(0,0,0,0.6)] flex items-end justify-center pb-[4px] text-white text-[11px] font-bold leading-none z-20">74</div>
      <div className="absolute left-[1047px] top-[13px] w-[178px] h-[22px] bg-white border border-[#b6c8d8] flex items-center pl-[10px] text-[#1b6fb5] z-20">
        <span className="text-[14px] font-bold leading-none">中</span>
        <span className="ml-[8px] text-[14px] font-bold leading-none">°,</span>
        <Smile className="ml-[7px]" size={16} color="#1b6fb5" strokeWidth={2} />
        <Mic className="ml-[6px]" size={16} color="#1b6fb5" strokeWidth={2.5} />
        <Keyboard className="ml-[6px]" size={16} color="#1b6fb5" strokeWidth={2.5} />
        <Users className="ml-[5px]" size={15} color="#a8b4c0" strokeWidth={2.5} />
        <Shirt className="ml-[6px]" size={15} color="#1b6fb5" fill="#1b6fb5" />
        <Wrench className="ml-[5px]" size={14} color="#1b6fb5" fill="#1b6fb5" />
      </div>
      <div className="absolute left-[1018px] top-[10px] w-[28px] h-[25px] bg-[#ee5a24] rounded-[3px] rotate-[-8deg] flex items-center justify-center text-white text-[20px] font-bold leading-none z-20">S</div>
      {/* scrollbar column to the right of the dialog */}
      <div className="absolute left-[1344px] top-[127px] w-[16px] h-[577px] bg-[#f0f0f0] border-y border-r border-[#c8c8c8] flex flex-col items-center z-0">
        <ChevronUp className="mt-[12px]" size={13} color="#555" strokeWidth={2.5} />
        <span className="mt-[2px] w-full h-[309px] bg-[#c8c8c8]" />
        <ChevronDown className="mt-auto mb-[6px]" size={13} color="#555" strokeWidth={2.5} />
      </div>
    </>
  );
}

export default function App() {
  return (
    <div className="relative w-[1366px] h-[768px] overflow-hidden flex flex-col bg-white text-[12px] font-['Liberation_Sans','Noto_Sans_CJK_SC',sans-serif]">
      <TitleBar />
      <MenuBar />
      <ToolBar />
      <div className="h-[623px] flex shrink-0 relative bg-[#f0f0f0] z-0">
        <LeftPanel />
        <MiddlePanel />
        <RightPanel />
      </div>
      <StatusBar />
      <TaskBar />
      <Dialog />
      <Overlays />
    </div>
  );
}
